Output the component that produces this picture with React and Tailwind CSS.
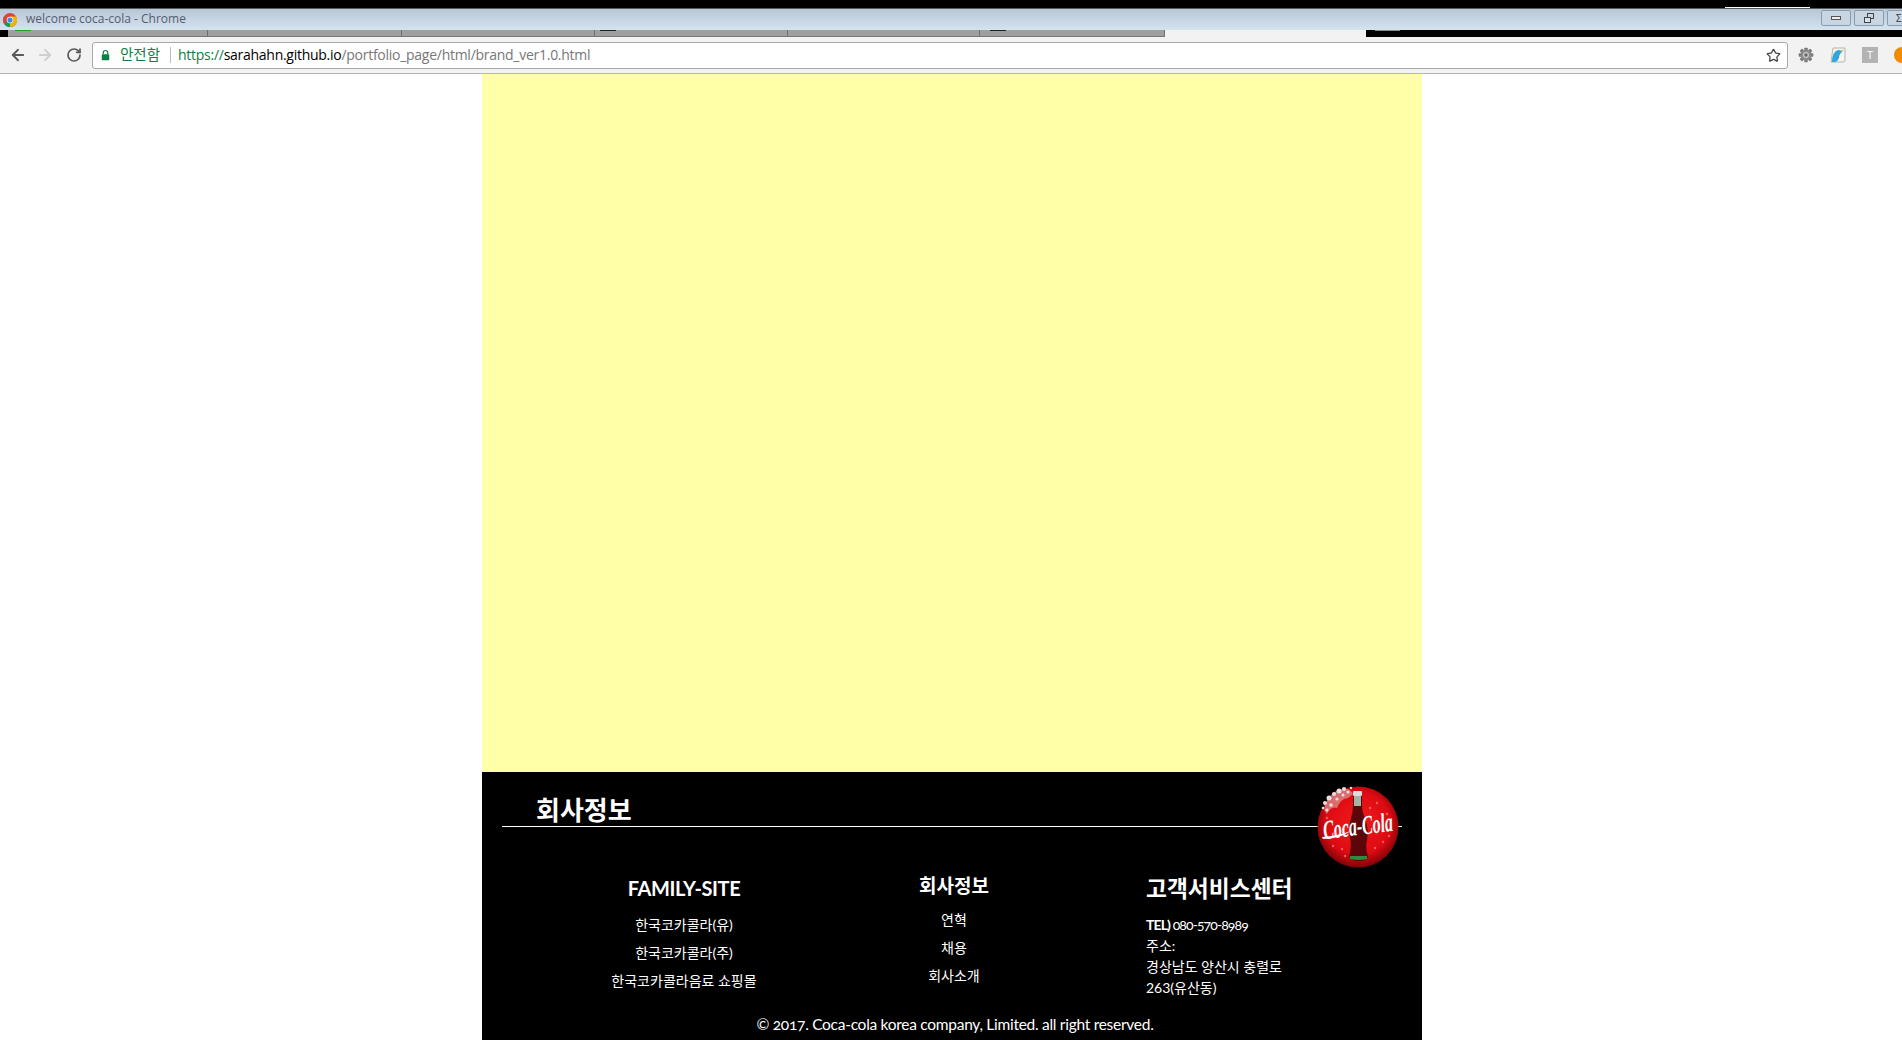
import { ArrowLeft, ArrowRight, RotateCw, Star } from "lucide-react";

const KR = { fontFamily: '"Lato","Noto Sans CJK KR",sans-serif' };

function ChromeLogo() {
  return (
    <svg viewBox="0 0 32 32" className="w-[14px] h-[14px] shrink-0">
      <circle cx="16" cy="16" r="16" fill="#db4437" />
      <path d="M16 16 L2.2 24 A16 16 0 0 1 2 8 Z" fill="#db4437" />
      <path d="M16 16 L30 24 A16 16 0 0 1 2 24 Z" fill="#0f9d58" />
      <path d="M16 16 L16 32 A16 16 0 0 0 30 8 L16 8 Z" fill="#f4b400" />
      <circle cx="16" cy="16" r="7.5" fill="#fff" />
      <circle cx="16" cy="16" r="6" fill="#4285f4" />
    </svg>
  );
}

function Gear() {
  const teeth = [0, 45, 90, 135];
  return (
    <svg viewBox="0 0 24 24" className="w-4 h-4">
      {teeth.map((t) => (
        <rect key={t} x="9.5" y="1" width="5" height="22" rx="1" fill="#777" transform={`rotate(${t} 12 12)`} />
      ))}
      <circle cx="12" cy="12" r="8.5" fill="#8a8a8a" />
      <circle cx="12" cy="12" r="4.5" fill="#c8c8c8" />
      <circle cx="12" cy="12" r="2.5" fill="#666" />
    </svg>
  );
}

function Bird() {
  return (
    <svg viewBox="0 0 16 16" className="w-4 h-4">
      <path d="M3 1 H15 V13 Q15 15 13 15 H1 Z" fill="#f7f5ea" stroke="#9a9a9a" strokeWidth="0.7" />
      <path d="M2 15 Q2 5 8 3 Q11 2.5 12 5 Q9 7 9 11 Q8 14 5 15 Z" fill="#2ea6dc" />
      <path d="M11 3.5 L14 3 L12 5 Z" fill="#e8a41c" />
    </svg>
  );
}

function CokeLogo() {
  const drops = [
    [10, 32], [16, 60], [25, 63], [60, 17], [70, 28], [66, 56], [58, 62], [28, 70], [53, 22], [72, 50],
  ];
  const splash = [
    [8, 17, 2], [12, 12, 2.5], [17, 8, 2], [22, 5, 2.5], [27, 3, 2], [31, 6, 1.6], [14, 19, 1.8], [20, 13, 1.6], [26, 9, 1.5], [10, 24, 1.5], [34, 2, 1.2], [6, 22, 1.3],
  ];
  return (
    <svg viewBox="0 0 82 82" className="w-[82px] h-[82px] overflow-visible">
      <defs>
        <radialGradient id="coke" cx="50%" cy="45%" r="55%">
          <stop offset="0%" stopColor="#f01c1c" />
          <stop offset="72%" stopColor="#dd0a12" />
          <stop offset="100%" stopColor="#7f0307" />
        </radialGradient>
      </defs>
      <circle cx="41" cy="41" r="40.5" fill="url(#coke)" />
      {drops.map(([x, y], i) => (
        <circle key={i} cx={x} cy={y} r="1.2" fill="#f77" opacity="0.75" />
      ))}
      <path d="M7 24 Q10 8 22 4 Q32 0 36 8 L31 12 Q24 12 20 22 Q14 20 10 28 Z" fill="#d98f8f" opacity="0.75" />
      {splash.map(([x, y, r], i) => (
        <circle key={i} cx={x} cy={y} r={r} fill="#f2dddd" />
      ))}
      <path d="M36 7 H45 V18 Q45 26 48 32 Q52 44 50 54 Q48 62 51 70 Q51 75 42 75 Q33 75 32 70 Q35 60 33 52 Q31 42 34 32 Q36 26 36 18 Z" fill="#5c0609" />
      <rect x="36" y="5" width="9" height="5" rx="1" fill="#dcdcdc" />
      <rect x="37" y="10" width="7" height="10" fill="#a5b3a5" />
      <path d="M33 70 H50 V73 Q42 75 33 73 Z" fill="#2f8a3e" />
      <g transform="rotate(-7 41 41)">
        <text
          x="41"
          y="49"
          textAnchor="middle"
          fontFamily="'Liberation Serif',serif"
          fontStyle="italic"
          fontWeight="700"
          fontSize="27"
          fill="#fff"
          textLength="70"
          lengthAdjust="spacingAndGlyphs"
        >
          Coca-Cola
        </text>
      </g>
      <path d="M5 51 Q20 50 34 45 Q22 53 6 53 Z" fill="#fff" />
    </svg>
  );
}

const tabs = [
  { w: 200, mark: "ml-[7px] bg-[#1aa51a]" },
  { w: 194, mark: "" },
  { w: 193, mark: "" },
  { w: 193, mark: "ml-[5px] bg-[#222]" },
  { w: 192, mark: "" },
  { w: 185, mark: "ml-[10px] bg-[#222]" },
];

function Browser() {
  return (
    <header className="shrink-0" style={{ fontFamily: '"Open Sans","Noto Sans CJK KR",sans-serif' }}>
      <div className="h-2 bg-black flex justify-end">
        <div className="w-[85px] h-px mt-[7px] mr-[92px] bg-white" />
      </div>
      <div className="h-[22px] bg-gradient-to-b from-[#b7c7d7] to-[#d5e3f0] flex items-center pl-[3px] gap-[9px] border-t border-[#5a5a5a]">
        <ChromeLogo />
        <span className="text-[12px] leading-none text-[#565c70] grow -mt-[2px]">welcome coca-cola - Chrome</span>
        <div className="flex gap-[3px] self-start mt-[1px] -mr-[15px]">
          <div className="w-[30px] h-[16px] border border-[#8a9cb2] rounded-[2px] bg-[#c8d6e4] flex items-center justify-center">
            <div className="w-[10px] h-[4px] border border-[#555] bg-[#eee]" />
          </div>
          <div className="w-[30px] h-[16px] border border-[#8a9cb2] rounded-[2px] bg-[#c8d6e4] flex items-center justify-center">
            <div className="relative w-[10px] h-[10px]">
              <div className="absolute right-0 top-0 w-[7px] h-[6px] border border-[#444]" />
              <div className="absolute left-0 bottom-0 w-[7px] h-[6px] border border-[#444] bg-[#d8e2ec]" />
            </div>
          </div>
          <div className="w-[30px] h-[16px] border border-[#8a9cb2] rounded-[2px] bg-[#c8d6e4] flex items-center justify-start pl-2 text-[10px] leading-none text-[#333]">
            Σ
          </div>
        </div>
      </div>
      <div className="h-[7px] flex">
        <div className="w-[8px] bg-black" />
        <div className="w-[1157px] bg-[#9f9f9f] border-b border-[#777] flex">
          {tabs.map((t, i) => (
            <div key={i} className="border-r border-[#6f6f6f]" style={{ width: t.w }}>
              {t.mark && <div className={`w-[16px] h-px ${t.mark}`} />}
            </div>
          ))}
        </div>
        <div className="w-[201px] bg-[#f2f2f2]" />
        <div className="grow bg-black">
          <div className="ml-[9px] w-[25px] h-px bg-[#888]" />
        </div>
      </div>
      <div className="h-[37px] bg-[#f2f2f2] border-b border-[#b5b5b5] flex items-center">
        <ArrowLeft className="w-[18px] h-[18px] ml-[9px] text-[#5a5a5a]" strokeWidth={2.4} />
        <ArrowRight className="w-[18px] h-[18px] ml-[9px] text-[#cfcfcf]" strokeWidth={2.4} />
        <RotateCw className="w-[16px] h-[16px] ml-[12px] text-[#5a5a5a]" strokeWidth={2.6} />
        <div className="ml-[10px] w-[1696px] h-[27px] bg-white border border-[#a9a9a9] rounded-[3px] flex items-center shrink-0">
          <svg viewBox="0 0 12 14" className="ml-[8px] w-[9px] h-[12px]">
            <path d="M3 6 V4 Q3 1 6 1 Q9 1 9 4 V6" fill="none" stroke="#0b8043" strokeWidth="1.6" />
            <rect x="1" y="6" width="10" height="8" rx="1" fill="#0b8043" />
          </svg>
          <span className="ml-[10px] text-[14.5px] leading-none text-[#0b8043]">안전함</span>
          <div className="ml-[10px] w-px h-[16px] bg-[#bbb]" />
          <span className="ml-[7px] text-[14px] leading-none text-[#777] grow tracking-[-0.27px]">
            <span className="text-[#0b8043]">https://</span>
            <span className="text-black">sarahahn.github.io</span>
            /portfolio_page/html/brand_ver1.0.html
          </span>
          <Star className="w-[15px] h-[15px] mr-[6px] text-[#444]" strokeWidth={2} />
        </div>
        <div className="flex items-center shrink-0 ml-[10px] gap-4">
          <Gear />
          <Bird />
          <div className="w-4 h-4 bg-[#b3b3b3] text-white text-[11px] leading-4 text-center">T</div>
          <div className="w-4 h-4 rounded-full bg-[#f08c00] -mr-[16px]" />
        </div>
      </div>
    </header>
  );
}

export default function App() {
  return (
    <div className="w-[1902px] h-[1040px] overflow-hidden bg-white flex flex-col">
      <Browser />
      <main className="w-[940px] ml-[482px] grow flex flex-col" style={KR}>
        <div className="h-[698px] bg-[#ffffa8] shrink-0" />
        <footer className="grow bg-black text-white flex flex-col">
          <div className="relative mx-5 h-[55px] border-b border-white pl-[34px] pt-[19px] shrink-0">
            <h2 className="text-[26px] leading-[38px] font-bold">회사정보</h2>
            <div className="absolute left-[815px] top-[14px]">
              <CokeLogo />
            </div>
          </div>
          <div className="flex pt-[48px] shrink-0 h-[186px] items-start">
            <div className="w-[404px] text-center -mt-[1px]">
              <h3 className="text-[20px] leading-[28px] font-bold tracking-[-0.4px]">FAMILY-SITE</h3>
              <ul className="mt-[9px] text-[14px] leading-[28px]">
                <li>한국코카콜라(유)</li>
                <li>한국코카콜라(주)</li>
                <li>한국코카콜라음료 쇼핑몰</li>
              </ul>
            </div>
            <div className="w-[136px] text-center -mt-[3px]">
              <h3 className="text-[19px] leading-[28px] font-bold">회사정보</h3>
              <ul className="mt-[6px] text-[14px] leading-[28px]">
                <li>연혁</li>
                <li>채용</li>
                <li>회사소개</li>
              </ul>
            </div>
            <div className="w-[150px] ml-[124px]">
              <h3 className="text-[22.75px] leading-[28px] font-bold whitespace-nowrap">고객서비스센터</h3>
              <div className="mt-[11px] text-[14px] leading-[21px]">
                <p className="oldstyle-nums tracking-[-0.9px]"><b>TEL)</b> 080-570-8989</p>
                <p>주소:</p>
                <p>경상남도 양산시 충렬로 263(유산동)</p>
              </div>
            </div>
          </div>
          <p className="text-center text-[15.5px] leading-[22px] oldstyle-nums tracking-[-0.28px] pl-[6px]">© 2017. Coca-cola korea company, Limited. all right reserved.</p>
        </footer>
      </main>
    </div>
  );
}
